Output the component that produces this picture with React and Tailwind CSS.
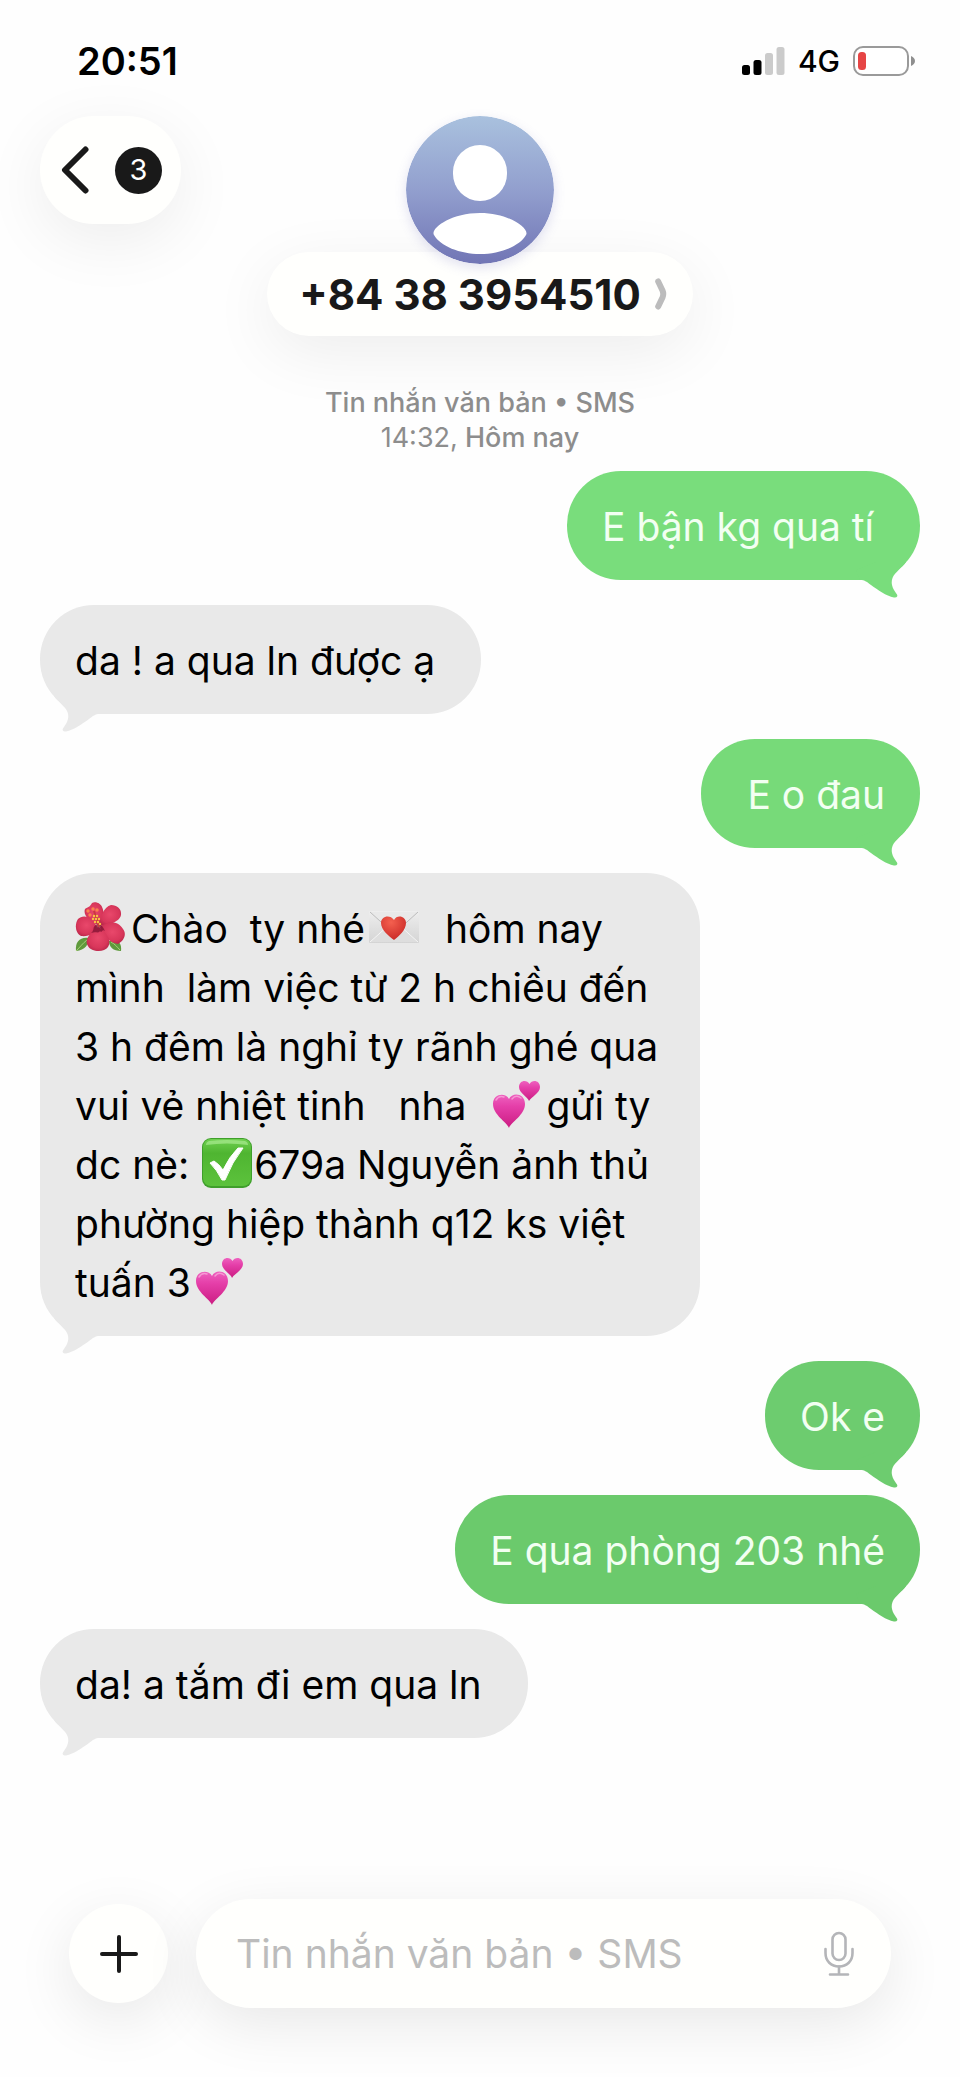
import React from "react";

const TAIL =
  "M0 8 L4 18 C9 18 11 20 15 23 C22 28 30 34 38 35.500 C41 36 42 34 41 32.500 C38 28 34 23 36.500 16 C39 10 46 6 50 0 L20 0 Z";

function Flower() {
  return (
    <svg role="img" aria-label="🌺" viewBox="0 0 50 50" className="mr-[6px] inline-block h-[50px] w-[50px] align-[-9px]">
      <defs>
        <radialGradient id="petal" cx="50%" cy="45%" r="60%">
          <stop offset="0" stopColor="#e9486b" />
          <stop offset="0.7" stopColor="#d8365a" />
          <stop offset="1" stopColor="#b9274a" />
        </radialGradient>
      </defs>
      <path d="M1 49 C0 40 5 35 13 36 C14 43 10 48 1 49Z" fill="#5f9a3c" />
      <path d="M1 49 C5 45 8 41 12 38" stroke="#a9cf7a" strokeWidth="1" fill="none" />
      <path d="M46 49 C47 41 43 37 34 39 C34 45 38 49 46 49Z" fill="#5f9a3c" />
      <path d="M45 48 C42 45 40 42 36 40" stroke="#a9cf7a" strokeWidth="1" fill="none" />
      <path d="M23 23 C13 20 8 12 10 7 C13 5 15 5 17 1 C21 -1 26 2 27 5 C30 11 28 19 23 23Z" fill="url(#petal)" />
      <path d="M24 24 C25 14 29 5 36 3 C42 3 46 7 46 11 C47 18 37 23 24 24Z" fill="url(#petal)" />
      <path d="M22 25 C17 14 8 12 3 17 C-1 23 1 32 6 34 C14 35 20 31 22 25Z" fill="url(#petal)" />
      <path d="M25 25 C34 17 44 20 48 27 C52 32 49 39 43 42 C35 41 28 34 25 25Z" fill="url(#petal)" />
      <path d="M23 25 C14 31 9 39 13 44 C16 50 29 51 33 45 C37 39 32 30 23 25Z" fill="url(#petal)" />
      <path d="M21 23 C24 20 28 24 30 29 C27 26 27 32 25 29 C23 32 21 29 16 31 C20 28 17 25 21 23Z" fill="#7d1231" opacity="0.75" />
      <path d="M24 25 L19 9" stroke="#c93a3f" strokeWidth="2" />
      <g fill="#f6c445">
        <circle cx="19" cy="14" r="1.200" /><circle cx="22" cy="14" r="1.200" />
        <circle cx="18" cy="17" r="1.200" /><circle cx="21" cy="17" r="1.200" />
        <circle cx="24" cy="17" r="1.200" /><circle cx="20" cy="20" r="1.200" />
        <circle cx="23" cy="20" r="1.200" /><circle cx="25" cy="22" r="1.200" />
      </g>
      <g fill="#f9824d">
        <circle cx="13" cy="9" r="1.700" /><circle cx="18" cy="7" r="1.700" />
        <circle cx="22" cy="8" r="1.700" /><circle cx="15" cy="13" r="1.700" />
      </g>
    </svg>
  );
}

function LoveLetter() {
  return (
    <svg role="img" aria-label="💌" viewBox="0 0 50 50" className="mx-1 inline-block h-[50px] w-[50px] align-[-9px]">
      <defs>
        <linearGradient id="paper" x1="0" y1="0" x2="0" y2="1">
          <stop offset="0" stopColor="#eeeeee" />
          <stop offset="1" stopColor="#d4d4d4" />
        </linearGradient>
        <radialGradient id="seal" cx="40%" cy="25%" r="75%">
          <stop offset="0" stopColor="#f4604f" />
          <stop offset="1" stopColor="#cb2b28" />
        </radialGradient>
      </defs>
      <rect x="0" y="9" width="50" height="32" rx="1" fill="url(#paper)" />
      <path d="M1 40 L20 23 H30 L49 40Z" fill="#dedede" />
      <path d="M1 40 L20 23 M49 40 L30 23" stroke="#f5f5f5" strokeWidth="1" />
      <path d="M1 10 L22 29 Q25 32 28 29 L49 10Z" fill="#e9e9e9" />
      <path d="M1 10 L22 29 Q25 32 28 29 L49 10" fill="none" stroke="#bcbcbc" strokeWidth="1" />
      <path d="M25 38 C20 34 12 28 12 21 C12 14 21 12 25 18 C28 12 37 14 37 21 C37 28 30 34 25 38Z" fill="url(#seal)" />
    </svg>
  );
}

function TwoHearts({ id }) {
  return (
    <svg role="img" aria-label="💕" viewBox="0 0 50 50" className="mx-1 inline-block h-[50px] w-[50px] align-[-9px]">
      <defs>
        <linearGradient id={id} x1="0" y1="0" x2="0" y2="1">
          <stop offset="0" stopColor="#ee62bf" />
          <stop offset="0.35" stopColor="#e53fa9" />
          <stop offset="1" stopColor="#cb1c82" />
        </linearGradient>
      </defs>
      <path d="M17 49 C15 43 1 36 1 25 C1 15 13 13 17 20 C20 13 33 14 33 25 C33 36 19 43 17 49Z" fill={`url(#${id})`} />
      <path d="M37 22 C36 18 27 14 27 8 C27 1 35 0 37.500 5 C40 0 48 1 48 8 C48 14 39 18 37 22Z" fill={`url(#${id})`} />
      <path d="M4 21 Q7 16 12 18 M20 20 Q24 15 29 19" stroke="#fbb3e0" strokeWidth="1.500" fill="none" opacity="0.7" strokeLinecap="round" />
    </svg>
  );
}

function CheckMark() {
  return (
    <svg role="img" aria-label="✅" viewBox="0 0 50 50" className="mx-[2px] inline-block h-[50px] w-[50px] align-[-9px]">
      <defs>
        <linearGradient id="tile" x1="0" y1="0" x2="0" y2="1">
          <stop offset="0" stopColor="#6fd050" />
          <stop offset="0.3" stopColor="#4fb531" />
          <stop offset="1" stopColor="#5cc23c" />
        </linearGradient>
      </defs>
      <rect x="0" y="0" width="50" height="50" rx="9" fill="#3f9f2b" />
      <rect x="1" y="1" width="48" height="47" rx="8" fill="url(#tile)" />
      <path d="M7 3 Q25 1 43 3 Q46 4 46 7 Q25 4 4 7 Q4 4 7 3Z" fill="#b4f09c" opacity="0.6" />
      <path d="M36 10 L41 10 Q30 24 23 42 L20 42 Q15 32 8 25 L12 23 Q17 26 21 32 Q27 19 36 10Z" fill="#ffffff" stroke="#ffffff" strokeWidth="1" strokeLinejoin="round" />
    </svg>
  );
}

function Sent({ color, children }) {
  return (
    <li className={`relative flex self-end ${color}`}>
      <p className="rounded-[54px] bg-current px-[35px] pt-[26px] pb-6">
        <span className="text-[#f2fff2]">{children}</span>
      </p>
      <svg aria-hidden="true" viewBox="0 0 64 36" className="absolute right-0 -bottom-[18px] h-9 w-16 fill-current">
        <path d={TAIL} />
      </svg>
    </li>
  );
}

function Received({ lines, long }) {
  return (
    <li className="relative flex self-start text-[#e9e9e9]">
      <div className={`rounded-[54px] bg-current px-[35px] pt-[26px] pb-6 ${long ? "w-[660px]" : ""}`}>
        {lines.map((line, i) => (
          <p key={i} className="h-[59px] text-black">{line}</p>
        ))}
      </div>
      <svg aria-hidden="true" viewBox="0 0 64 36" className="absolute -bottom-[18px] left-0 h-9 w-16 fill-current">
        <path d={TAIL} transform="translate(64 0) scale(-1 1)" />
      </svg>
    </li>
  );
}

const LONG_MESSAGE = [
  <><Flower />{"Chào  ty nhé"}<LoveLetter />{"  hôm nay"}</>,
  "mình  làm việc từ 2 h chiều đến",
  "3 h đêm là nghỉ ty rãnh ghé qua",
  <>{"vui vẻ nhiệt tinh   nha  "}<TwoHearts id="heartsA" />gửi ty</>,
  <>{"dc nè: "}<CheckMark />679a Nguyễn ảnh thủ</>,
  "phường hiệp thành q12 ks việt",
  <>tuấn 3<TwoHearts id="heartsB" /></>,
];

function StatusBar() {
  return (
    <div className="flex h-[116px] items-center justify-between pt-[6px] pr-[45px] pl-[77px]">
      <time className="text-[38px] font-semibold text-black">20:51</time>
      <div className="flex items-center gap-[13px]">
        <svg aria-label="Signal" viewBox="0 0 43 28" className="h-7 w-[43px]">
          <rect x="0" y="18" width="8" height="10" rx="2.500" fill="#000" />
          <rect x="11.500" y="13" width="8" height="15" rx="2.500" fill="#000" />
          <rect x="23" y="6" width="8" height="22" rx="2.500" fill="#cbcbcb" />
          <rect x="34.500" y="0" width="8" height="28" rx="2.500" fill="#cbcbcb" />
        </svg>
        <span className="text-[30px] font-medium text-black">4G</span>
        <svg aria-label="Battery" viewBox="0 0 62 30" className="h-[30px] w-[62px]">
          <rect x="1" y="1" width="54" height="28" rx="9" fill="#fff" stroke="#9a9a9a" strokeWidth="2" />
          <rect x="5" y="6" width="8" height="18" rx="3.500" fill="#e64545" />
          <path d="M58 10 Q62 12 62 15 Q62 18 58 20Z" fill="#8f8f8f" />
        </svg>
      </div>
    </div>
  );
}

export default function App() {
  return (
    <div className="flex min-h-screen flex-col overflow-hidden bg-[#fefefe] font-['Inter','Noto_Sans',sans-serif]">
      <StatusBar />
      <header className="grid grid-cols-[1fr_auto_1fr] items-start px-10">
        <button
          type="button"
          aria-label="Back, 3 unread"
          className="flex h-[108px] w-[141px] items-center justify-between rounded-full bg-[#fffffd] pr-[19px] pl-[21px] shadow-[0_16px_64px_rgba(0,0,0,0.07)]"
        >
          <svg aria-hidden="true" viewBox="0 0 28 48" className="h-12 w-7">
            <path d="M24.500 3.500 L4 24 L24.500 44.500" fill="none" stroke="#191919" strokeWidth="6" strokeLinecap="round" strokeLinejoin="round" />
          </svg>
          <span className="flex h-[47px] w-[47px] items-center justify-center rounded-full bg-[#191919] text-[29px] text-white">3</span>
        </button>

        <div className="flex flex-col items-center">
          <svg role="img" aria-label="Contact photo" viewBox="0 0 148 148" className="z-10 h-[148px] w-[148px] rounded-full shadow-[0_4px_12px_rgba(110,110,190,0.2)]">
            <defs>
              <linearGradient id="avatar" x1="0" y1="0" x2="0" y2="1">
                <stop offset="0" stopColor="#a9c1de" />
                <stop offset="0.5" stopColor="#929fce" />
                <stop offset="1" stopColor="#7175b5" />
              </linearGradient>
            </defs>
            <circle cx="74" cy="74" r="74" fill="url(#avatar)" />
            <rect x="47" y="29" width="54" height="56" rx="27" fill="#fff" />
            <path d="M28 119 C24 113 44 97 74 97 C104 97 124 113 120 119 C114 130 94 138 74 138 C54 138 34 130 28 119Z" fill="#fff" />
          </svg>
          <button
            type="button"
            className="-mt-3 flex h-[84px] items-center gap-[14px] rounded-full bg-[#fffffd] pr-[26px] pl-8 shadow-[0_16px_64px_rgba(0,0,0,0.07)]"
          >
            <h1 className="text-[42px] font-bold whitespace-nowrap text-[#191919]">+84 38 3954510</h1>
            <svg aria-hidden="true" viewBox="0 0 12 32" className="h-8 w-3">
              <path d="M3.200 3.500 L7.500 12.500 Q9 16 7.500 19.500 L3.200 28.500" fill="none" stroke="#bcbcbc" strokeWidth="6" strokeLinecap="round" strokeLinejoin="round" />
            </svg>
          </button>
        </div>
      </header>

      <div className="mt-[49px] text-center text-[27px] leading-[35px] font-medium text-[#8d8d8d]">
        <p>Tin nhắn văn bản • SMS</p>
        <p><span className="font-normal">14:32,</span> Hôm nay</p>
      </div>

      <ol className="mt-4 flex flex-col gap-[25px] px-10 text-[39px] leading-[59px] whitespace-pre">
        <Sent color="text-[#79dd7c]">{"E bận kg qua tí\u00a0"}</Sent>
        <Received lines={["da ! a qua ln được ạ\u00a0"]} />
        <Sent color="text-[#77da79]">{"\u00a0E o đau"}</Sent>
        <Received long lines={LONG_MESSAGE} />
        <Sent color="text-[#6dcc6f]">Ok e</Sent>
        <Sent color="text-[#6bca6c]">E qua phòng 203 nhé</Sent>
        <Received lines={["da! a tắm đi em qua ln\u00a0"]} />
      </ol>

      <form className="mt-auto flex items-center gap-7 px-[69px] pt-16 pb-[69px]" onSubmit={(e) => e.preventDefault()}>
        <button
          type="button"
          aria-label="Add attachment"
          className="flex h-[99px] w-[99px] shrink-0 items-center justify-center rounded-full bg-[#fffffd] shadow-[0_16px_60px_rgba(0,0,0,0.09)]"
        >
          <svg aria-hidden="true" viewBox="0 0 38 38" className="h-[38px] w-[38px]">
            <path d="M19 2 V36 M2 19 H36" stroke="#191919" strokeWidth="4" strokeLinecap="round" />
          </svg>
        </button>
        <div className="flex h-[109px] min-w-0 flex-1 items-center rounded-full bg-[#fffffd] pr-9 pl-10 shadow-[0_16px_60px_rgba(0,0,0,0.09)]">
          <input
            type="text"
            aria-label="Message"
            placeholder="Tin nhắn văn bản • SMS"
            className="h-16 min-w-0 flex-1 bg-transparent text-[39px] text-black outline-none placeholder:text-[#bcbcbc]"
          />
          <button type="button" aria-label="Dictate">
            <svg aria-hidden="true" viewBox="0 0 32 46" className="h-[46px] w-8">
              <g fill="none" stroke="#b4b5b8" strokeWidth="2.600" strokeLinecap="round" strokeLinejoin="round">
                <rect x="9.500" y="2" width="13" height="27" rx="6.500" />
                <path d="M2.500 18 V22 C2.500 30 8 35.500 16 35.500 C24 35.500 29.500 30 29.500 22 V18" />
                <path d="M16 35.500 V43.500 M7 43.500 H25" />
              </g>
            </svg>
          </button>
        </div>
      </form>
    </div>
  );
}
